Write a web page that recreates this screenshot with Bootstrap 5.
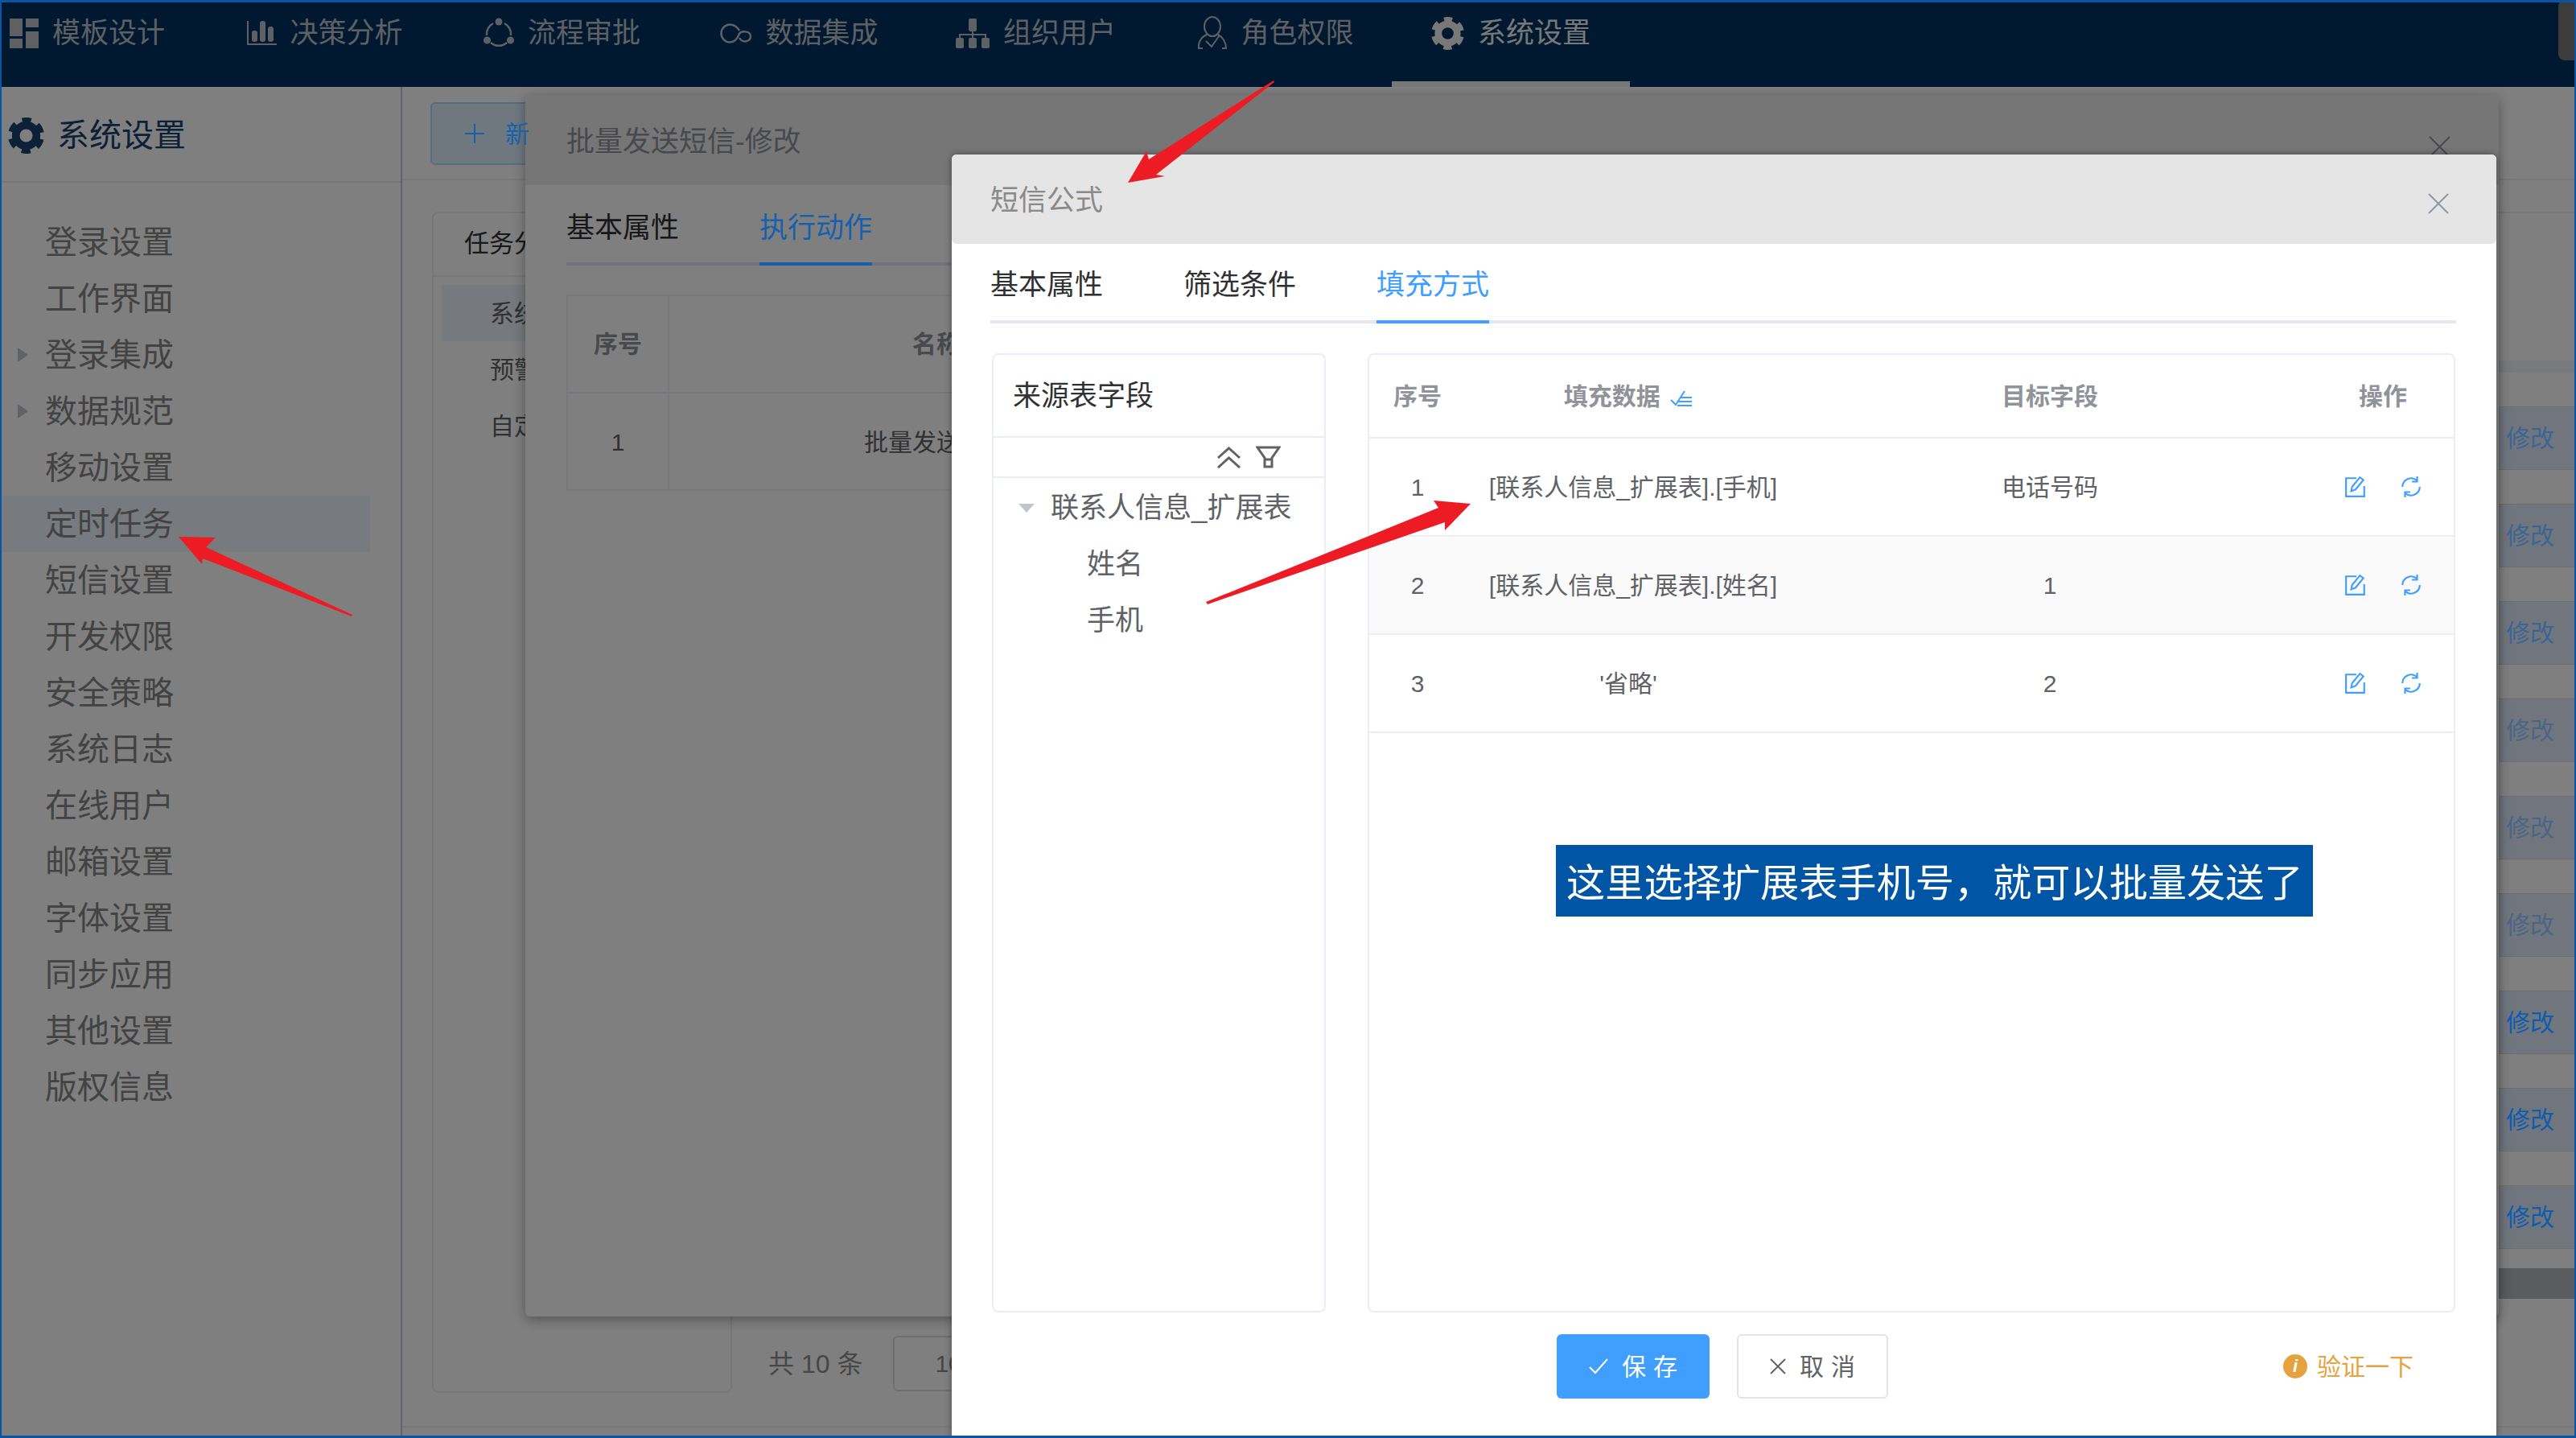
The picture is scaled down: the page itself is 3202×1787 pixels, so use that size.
<!DOCTYPE html>
<html lang="zh-CN">
  <head>
    <meta charset="UTF-8" />
    <title>短信公式</title>
    <link
      href="https://cdn.jsdelivr.net/npm/bootstrap@5.3.0/dist/css/bootstrap.min.css"
      rel="stylesheet"
    />
    <style>
      html,
      body {
        height: 100%;
      }
      body {
        position: relative;
        overflow: hidden;
        background: #fff;
        color: #606266;
        font-family: "Liberation Sans", "Noto Sans CJK SC", sans-serif;
        font-size: 30px;
      }
      .app-shell {
        height: 1787px;
      }
      /* saturated blues stay bright above the dim layer */
      .over-dim {
        position: relative;
        z-index: 1;
      }

      /* top bar */
      .top-bar {
        height: 108px;
        flex: none;
        background: #003060;
        padding-left: 0;
        color: #bcc0c8;
        font-size: 35px;
      }
      .top-item {
        width: 295.5px;
        height: 108px;
        flex: none;
        line-height: 82px;
        padding-left: 50px;
        border-bottom: 7px solid transparent;
      }
      .top-item:first-child {
        margin-left: -46px;
      }
      .top-item.is-on {
        width: 296px;
        margin-left: 3px;
        padding-left: 46px;
        color: #f0f0f0;
        border-bottom-color: #f0f0f0;
      }
      .top-icon {
        width: 61px;
        height: 82px;
        padding-right: 17px;
      }
      .top-blob {
        position: absolute;
        top: 0;
        right: 0;
        width: 22px;
        height: 75px;
        background: #787878;
        border-radius: 8px 0 0 8px;
      }

      /* left menu */
      .side-menu {
        width: 500px;
        flex: none;
        border-right: 2px solid #c6c6d6;
      }
      .side-title {
        height: 119px;
        padding: 3px 0 0 10px;
        gap: 16px;
        border-bottom: 2px solid #eaeaf4;
        font-size: 40px;
        color: #184070;
      }
      .side-list {
        padding-top: 39px;
        width: 460px;
      }
      .side-item {
        height: 70px;
        padding-left: 22px;
        font-size: 40px;
        color: #868686;
      }
      .side-item.is-on {
        background: #eef4ff;
      }
      .side-caret {
        width: 34px;
      }
      .caret-right {
        display: block;
        width: 0;
        height: 0;
        border-style: solid;
        border-width: 9px 0 9px 13px;
        border-color: transparent transparent transparent #c0c4cc;
      }

      /* page behind the dialogs */
      .page-main {
        padding-bottom: 13px;
      }
      .page-inner {
        border-bottom: 2px solid #ebeef5;
        height: 100%;
      }
      .tool-row {
        height: 116px;
        padding: 19px 0 0 35px;
        border-bottom: 2px solid #ebeef5;
      }
      .add-btn {
        width: 200px;
        height: 78px;
        padding-left: 40px;
        gap: 25px;
        background: #dff0ff;
        border: 2px solid #b3d8ff;
        border-radius: 6px;
        color: #1660ad;
      }
      .page-body {
        padding: 39px 0 0 37px;
        gap: 15px;
      }
      .class-box {
        width: 373px;
        height: 1468px;
        flex: none;
        border: 2px solid #ebeef5;
        border-radius: 8px;
      }
      .class-head {
        height: 79px;
        padding-left: 38px;
        border-bottom: 2px solid #ebeef5;
        font-size: 31px;
        color: #303133;
      }
      .class-list {
        padding: 10px 10px 0;
      }
      .class-row {
        height: 70px;
        padding-left: 60px;
      }
      .class-row.is-on {
        background: #ecf2fb;
      }
      .task-head {
        height: 185px;
        border-top: 2px solid #ebeef5;
      }
      .task-band {
        height: 15px;
        background: #f0f4fa;
        margin-bottom: 42px;
      }
      .task-row {
        height: 79px;
        margin-bottom: 42px;
        padding-right: 27px;
        background: #e2ecfc;
        border-top: 1px solid #ddd;
        border-bottom: 1px solid #ddd;
      }
      .link-dim {
        color: #3a6594;
      }
      .link-mid {
        color: #4a6585;
      }
      .link-on {
        color: #0d5cb0;
      }
      .task-bar {
        height: 38px;
        margin-top: -18px;
        background: #b4b8c0;
      }
      .pager-row {
        margin-top: 46px;
        padding-left: 30px;
        gap: 38px;
        color: #8e8e8e;
      }
      .pager-total {
        font-size: 32px;
      }
      .pager-box {
        width: 200px;
        height: 69px;
        padding-left: 50px;
        border: 2px solid #dcdfe6;
        border-radius: 6px;
      }

      /* first dialog, dimmed */
      .dialog-back {
        position: absolute;
        left: 653px;
        top: 118px;
        width: 2453px;
        height: 1518px;
        background: #fff;
        border-radius: 6px;
        box-shadow: 0 4px 16px rgba(0, 0, 0, 0.35);
      }
      .dialog-back-head {
        height: 112px;
        padding: 4px 60px 0 51px;
        background: #ececec;
        border-radius: 6px 6px 0 0;
        font-size: 35px;
        color: #909399;
      }
      .back-close {
        margin-top: 12px;
      }
      .back-tabs {
        height: 100px;
        margin: 0 51px;
        gap: 100px;
        border-bottom: 4px solid #e4e7ed;
        font-size: 35px;
        color: #303133;
      }
      .back-tab {
        height: 100px;
        line-height: 105px;
      }
      .back-tab.is-on {
        color: #1660ad;
        border-bottom: 4px solid #1660ad;
      }
      .back-table {
        margin: 36px 0 0 51px;
        width: 2351px;
        height: 244px;
        border: 2px solid #ebeef5;
      }
      .back-cell-a {
        width: 126px;
        border-right: 2px solid #ebeef5;
      }
      .back-line {
        height: 121px;
        border-bottom: 2px solid #ebeef5;
      }
      .back-bold {
        font-weight: 700;
        color: #909399;
      }
      .back-name {
        width: 664px;
      }

      .dim-layer {
        position: absolute;
        inset: 0;
        background: rgba(0, 0, 0, 0.5);
      }

      /* formula dialog */
      .dialog-front {
        position: absolute;
        left: 1183px;
        top: 192px;
        width: 1920px;
        height: 1595px;
        background: #fff;
        border-radius: 6px 6px 0 0;
        box-shadow: 0 0 8px rgba(0, 0, 0, 0.4);
      }
      .front-head {
        height: 111px;
        padding: 4px 59px 0 48px;
        background: #e5e5e5;
        border-radius: 6px;
        font-size: 35px;
        color: #8a8a8a;
      }
      .front-close {
        margin-top: 6px;
      }
      .front-tabs {
        height: 99px;
        margin: 0 50px 0 48px;
        gap: 100px;
        border-bottom: 4px solid #e4e7ed;
        font-size: 35px;
        color: #303133;
      }
      .front-tab {
        height: 99px;
        line-height: 102px;
      }
      .front-tab.is-on {
        color: #409eff;
        border-bottom: 4px solid #409eff;
      }
      .front-body {
        height: 1192px;
        margin: 37px 51px 0 50px;
        gap: 52px;
      }
      .field-box {
        width: 415px;
        flex: none;
        border: 2px solid #ebeef5;
        border-radius: 8px;
      }
      .field-head {
        height: 103px;
        padding: 2px 0 0 24px;
        border-bottom: 2px solid #ebeef5;
        font-size: 35px;
        color: #303133;
      }
      .field-tools {
        height: 50px;
        padding-right: 54px;
        gap: 18px;
        border-bottom: 2px solid #ebeef5;
      }
      .field-tree {
        font-size: 35px;
        padding-top: 2px;
      }
      .tree-row {
        height: 70px;
        padding-left: 31px;
        gap: 20px;
      }
      .tree-leaf {
        height: 70px;
        padding-left: 116px;
      }
      .caret-down {
        width: 0;
        height: 0;
        border-style: solid;
        border-width: 11px 10px 0;
        border-color: #c0c4cc transparent transparent;
      }
      .map-box {
        flex: 1 1 auto;
        border: 2px solid #ebeef5;
        border-radius: 8px;
        overflow: hidden;
      }
      .map-table {
        width: 100%;
        table-layout: fixed;
        margin: 0;
        --bs-table-bg: transparent;
      }
      .map-table th,
      .map-table td {
        text-align: center;
        vertical-align: middle;
        padding: 0;
        border-bottom: 2px solid #ebeef5;
        font-size: 30px;
        color: #606266;
      }
      .map-table th {
        height: 103px;
        color: #909399;
        font-weight: 700;
      }
      .map-table th.th-data {
        padding-right: 12px;
      }
      .map-table th.th-op {
        padding-left: 16px;
      }
      .map-table td {
        height: 122px;
      }
      .map-table td.td-quote {
        padding-right: 12px;
      }
      .map-table tr.row-alt td {
        background: #fafafa;
      }
      .col-no {
        width: 120px;
      }
      .col-data {
        width: 416px;
      }
      .col-target {
        width: 620px;
      }
      .op-cell {
        gap: 41px;
        padding-left: 16px;
      }
      .note-box {
        position: absolute;
        left: 751px;
        top: 858px;
        width: 941px;
        height: 89px;
        padding: 6px 0 0 13px;
        background: #0055a5;
        color: #fff;
        font-size: 48.2px;
        white-space: nowrap;
      }
      .front-foot {
        margin-top: 27px;
        padding: 0 103px 0 752px;
      }
      .save-btn,
      .cancel-btn {
        height: 80px;
        padding: 0 0 0 9px;
        gap: 17px;
        font-size: 30px;
        letter-spacing: 9px;
        border-radius: 6px;
      }
      .save-btn {
        width: 190px;
        background: #409eff;
        border: 0;
        color: #fff;
      }
      .cancel-btn {
        width: 188px;
        margin-left: 34px;
        background: #fff;
        border: 2px solid #e4e4e4;
        color: #606266;
      }
      .check-link {
        margin-left: auto;
        gap: 12px;
        color: #e6a23c;
      }
      .info-dot {
        width: 30px;
        height: 30px;
        border-radius: 50%;
        background: #e6a23c;
        color: #fff;
        font-size: 22px;
        font-style: italic;
        font-weight: 700;
        line-height: 30px;
        text-align: center;
      }

      .arrow-layer {
        position: absolute;
        left: 0;
        top: 0;
        z-index: 2;
        pointer-events: none;
      }
      .shot-frame {
        position: absolute;
        inset: 0;
        z-index: 2;
        border-style: solid;
        border-color: #0a55a3;
        border-width: 3px 2px 3px 2px;
        pointer-events: none;
      }
    </style>
  </head>

  <body>
    <svg width="0" height="0" class="position-absolute">
      <symbol id="gear" viewBox="0 0 28 28">
        <circle cx="14" cy="14" r="8" fill="none" stroke="currentColor" stroke-width="6" />
        <circle
          cx="14"
          cy="14"
          r="11.5"
          fill="none"
          stroke="currentColor"
          stroke-width="5"
          stroke-dasharray="6.6 5.44"
          stroke-dashoffset="-2.72"
        />
      </symbol>
      <symbol id="edit" viewBox="0 0 26 26">
        <path d="M14 3H2v21h21V12" fill="none" stroke="#409eff" stroke-width="2" />
        <path d="M9 13 18 2l4 3-9 11-5 2z" fill="none" stroke="#409eff" stroke-width="2" />
      </symbol>
      <symbol id="swap" viewBox="0 0 26 26">
        <path d="M3 13a10 10 0 0 1 17-7" fill="none" stroke="#409eff" stroke-width="2" />
        <path d="M23 13a10 10 0 0 1-17 7" fill="none" stroke="#409eff" stroke-width="2" />
        <path d="M20 1v6h-6M6 25v-6h6" fill="none" stroke="#409eff" stroke-width="2" />
      </symbol>
    </svg>

    <div class="app-shell d-flex flex-column">
      <header class="top-bar d-flex position-relative">
        <div class="top-item d-flex">
          <div class="top-icon d-flex align-items-center justify-content-end">
            <svg width="36" height="37" viewBox="0 0 36 37" fill="currentColor">
              <rect width="16" height="22" />
              <rect x="20" width="16" height="11" />
              <rect y="25" width="16" height="12" />
              <rect x="20" y="16" width="16" height="21" />
            </svg>
          </div>
          模板设计
        </div>
        <div class="top-item d-flex">
          <div class="top-icon d-flex align-items-center justify-content-end">
            <svg width="37" height="30" viewBox="0 0 37 30" fill="currentColor">
              <path d="M1 0v29h36" fill="none" stroke="currentColor" stroke-width="2" />
              <rect x="6" y="12" width="7" height="14" rx="3" />
              <rect x="16" y="0" width="7" height="26" rx="3" />
              <rect x="26" y="7" width="7" height="19" rx="3" />
            </svg>
          </div>
          决策分析
        </div>
        <div class="top-item d-flex">
          <div class="top-icon d-flex align-items-center justify-content-end">
            <svg width="38" height="38" viewBox="0 0 38 38" fill="none" stroke="currentColor" stroke-width="2.5">
              <path d="M12 7A15 15 0 0 0 4 22M26 7a15 15 0 0 1 8 15M9 31a15 15 0 0 0 20 0" />
              <circle cx="19" cy="5" r="4.5" fill="currentColor" stroke="none" />
              <circle cx="4.5" cy="28" r="4.5" fill="currentColor" stroke="none" />
              <circle cx="33.5" cy="28" r="4.5" fill="currentColor" stroke="none" />
            </svg>
          </div>
          流程审批
        </div>
        <div class="top-item d-flex">
          <div class="top-icon d-flex align-items-center justify-content-end">
            <svg width="40" height="25" viewBox="0 0 40 25" fill="none" stroke="currentColor" stroke-width="2.5">
              <path d="M24 9C21 4 18 1.500 12.500 1.500A11 11 0 0 0 12.500 23.500C19 23.500 22 18 24 13 26 9 38 9 38 16 38 23 28 25 24 18" />
            </svg>
          </div>
          数据集成
        </div>
        <div class="top-item d-flex">
          <div class="top-icon d-flex align-items-center justify-content-end">
            <svg width="42" height="37" viewBox="0 0 42 37" fill="currentColor">
              <rect x="16" width="10" height="16" rx="2" />
              <path d="M21 16v8M5 24v-4h32v4" fill="none" stroke="currentColor" stroke-width="2" />
              <rect y="24" width="10" height="13" rx="2" />
              <rect x="16" y="24" width="10" height="13" rx="2" />
              <rect x="32" y="24" width="10" height="13" rx="2" />
            </svg>
          </div>
          组织用户
        </div>
        <div class="top-item d-flex">
          <div class="top-icon d-flex align-items-center justify-content-end">
            <svg width="38" height="42" viewBox="0 0 38 42" fill="none" stroke="currentColor" stroke-width="2">
              <ellipse cx="19" cy="13" rx="10" ry="12" />
              <path d="M12 23C5 26 1 33 2 40h5M26 23c6 3 10 10 10 17h-5M11 31l7 7 9-13" />
            </svg>
          </div>
          角色权限
        </div>
        <div class="top-item is-on d-flex">
          <div class="top-icon d-flex align-items-center justify-content-end">
            <svg width="41" height="41"><use href="#gear" /></svg>
          </div>
          系统设置
        </div>
        <div class="top-blob"></div>
      </header>

      <div class="d-flex flex-grow-1 overflow-hidden">
        <aside class="side-menu">
          <div class="side-title d-flex align-items-center">
            <svg width="45" height="47"><use href="#gear" /></svg>
            系统设置
          </div>
          <div class="side-list" id="sideList"></div>
        </aside>

        <main class="page-main flex-grow-1 overflow-hidden">
          <div class="page-inner">
            <div class="tool-row">
              <div class="add-btn d-flex align-items-center">
                <svg class="over-dim" width="26" height="26" viewBox="0 0 26 26" stroke="#1660ad" stroke-width="2">
                  <path d="M13 1v24M1 13h24" />
                </svg>
                <span class="over-dim">新</span>
              </div>
            </div>
            <div class="page-body d-flex">
              <div class="class-box">
                <div class="class-head d-flex align-items-center">任务分类</div>
                <div class="class-list">
                  <div class="class-row is-on d-flex align-items-center">系统任务</div>
                  <div class="class-row d-flex align-items-center">预警任务</div>
                  <div class="class-row d-flex align-items-center">自定义任务</div>
                </div>
              </div>
              <div class="flex-grow-1">
                <div class="task-head"></div>
                <div class="task-band"></div>
                <div id="taskRows"></div>
                <div class="task-bar"></div>
                <div class="pager-row d-flex align-items-center">
                  <span class="pager-total">共 10 条</span>
                  <div class="pager-box d-flex align-items-center">10条/页</div>
                </div>
              </div>
            </div>
          </div>
        </main>
      </div>
    </div>

    <section class="dialog-back">
      <div class="dialog-back-head d-flex align-items-center justify-content-between">
        <span>批量发送短信-修改</span>
        <svg class="back-close" width="27" height="27" viewBox="0 0 26 26" stroke="#909399" stroke-width="2">
          <path d="M1 1l24 24M25 1 1 25" />
        </svg>
      </div>
      <div class="back-tabs d-flex">
        <div class="back-tab">基本属性</div>
        <div class="back-tab is-on over-dim">执行动作</div>
      </div>
      <div class="back-table">
        <div class="back-line d-flex">
          <div class="back-cell-a back-bold d-flex align-items-center justify-content-center">序号</div>
          <div class="back-name back-bold d-flex align-items-center justify-content-center">名称</div>
        </div>
        <div class="back-line d-flex border-bottom-0">
          <div class="back-cell-a d-flex align-items-center justify-content-center">1</div>
          <div class="back-name d-flex align-items-center justify-content-center">批量发送短信</div>
        </div>
      </div>
    </section>

    <div class="dim-layer"></div>

    <section class="dialog-front">
      <div class="front-head d-flex align-items-center justify-content-between">
        <span>短信公式</span>
        <svg class="front-close" width="26" height="26" viewBox="0 0 26 26" stroke="#8f99a6" stroke-width="2">
          <path d="M1 1l24 24M25 1 1 25" />
        </svg>
      </div>
      <div class="front-tabs d-flex">
        <div class="front-tab">基本属性</div>
        <div class="front-tab">筛选条件</div>
        <div class="front-tab is-on">填充方式</div>
      </div>

      <div class="front-body d-flex">
        <div class="field-box">
          <div class="field-head d-flex align-items-center">来源表字段</div>
          <div class="field-tools d-flex align-items-center justify-content-end">
            <svg width="31" height="27" viewBox="0 0 31 27" fill="none" stroke="#606266" stroke-width="3">
              <path d="M2 14 15.500 2 29 14M2 26l13.500-12L29 26" />
            </svg>
            <svg width="31" height="28" viewBox="0 0 31 28" fill="none" stroke="#606266" stroke-width="3">
              <path d="M2 2h27L20 15v11h-9V15zM11 17h9" />
            </svg>
          </div>
          <div class="field-tree">
            <div class="tree-row d-flex align-items-center"><span class="caret-down"></span>联系人信息_扩展表</div>
            <div class="tree-leaf d-flex align-items-center">姓名</div>
            <div class="tree-leaf d-flex align-items-center">手机</div>
          </div>
        </div>

        <div class="map-box">
          <table class="table map-table">
            <colgroup>
              <col class="col-no" />
              <col class="col-data" />
              <col class="col-target" />
              <col />
            </colgroup>
            <thead>
              <tr>
                <th>序号</th>
                <th class="th-data">
                  填充数据
                  <svg width="28" height="20" viewBox="0 0 28 20" fill="none" stroke="#409eff" stroke-width="2" class="ms-1">
                    <path d="M1 12l6 6L18 1M13 9h14M10 14h17M9 19h18" />
                  </svg>
                </th>
                <th>目标字段</th>
                <th class="th-op">操作</th>
              </tr>
            </thead>
            <tbody id="mapRows"></tbody>
          </table>
        </div>
      </div>

      <div class="note-box d-flex align-items-center">这里选择扩展表手机号，就可以批量发送了</div>

      <div class="front-foot d-flex align-items-center">
        <button class="save-btn d-flex align-items-center justify-content-center" type="button">
          <svg width="24" height="20" viewBox="0 0 24 20" fill="none" stroke="#fff" stroke-width="2">
            <path d="M1 11l7 7L23 1" />
          </svg>
          保存
        </button>
        <button class="cancel-btn d-flex align-items-center justify-content-center" type="button">
          <svg width="20" height="20" viewBox="0 0 20 20" stroke="#606266" stroke-width="2">
            <path d="M1 1l18 18M19 1 1 19" />
          </svg>
          取消
        </button>
        <div class="check-link d-flex align-items-center">
          <span class="info-dot">i</span>
          验证一下
        </div>
      </div>
    </section>

    <svg class="arrow-layer" width="3202" height="1787" viewBox="0 0 3202 1787" fill="#ed1c24">
      <polygon points="1583,100 1584,102 1437,217 1448,219 1402,227 1425,188 1428,198" />
      <polygon points="438,764 437,766 252,694 251,701 222,667 268,668 256,680" />
      <polygon points="1499,748 1501,751 1796,649 1796,659 1828,626 1782,622 1788,631" />
    </svg>

    <div class="shot-frame"></div>

    <script>
      const sideItems = [
        "登录设置",
        "工作界面",
        "登录集成",
        "数据规范",
        "移动设置",
        "定时任务",
        "短信设置",
        "开发权限",
        "安全策略",
        "系统日志",
        "在线用户",
        "邮箱设置",
        "字体设置",
        "同步应用",
        "其他设置",
        "版权信息",
      ];
      const sideList = document.getElementById("sideList");
      sideItems.forEach((name, i) => {
        const row = document.createElement("div");
        row.className = "side-item d-flex align-items-center" + (i === 5 ? " is-on" : "");
        const caret = i === 2 || i === 3 ? '<span class="caret-right"></span>' : "";
        row.innerHTML = `<span class="side-caret">${caret}</span>${name}`;
        sideList.appendChild(row);
      });

      const taskRows = document.getElementById("taskRows");
      for (let i = 0; i < 9; i++) {
        const tone = i < 3 ? "link-dim" : i < 6 ? "link-mid" : "link-on";
        const row = document.createElement("div");
        row.className = "task-row d-flex align-items-center justify-content-end";
        row.innerHTML = `<span class="over-dim ${tone}">修改</span>`;
        taskRows.appendChild(row);
      }

      const mapData = [
        ["1", "[联系人信息_扩展表].[手机]", "电话号码"],
        ["2", "[联系人信息_扩展表].[姓名]", "1"],
        ["3", "'省略'", "2"],
      ];
      const mapRows = document.getElementById("mapRows");
      mapData.forEach((item, i) => {
        const row = document.createElement("tr");
        if (i === 1) row.className = "row-alt";
        row.innerHTML = `<td>${item[0]}</td>
                         <td class="${i === 2 ? "td-quote" : ""}">${item[1]}</td>
                         <td>${item[2]}</td>
                         <td>
                           <div class="op-cell d-flex justify-content-center">
                             <svg width="28" height="28"><use href="#edit" /></svg>
                             <svg width="28" height="28"><use href="#swap" /></svg>
                           </div>
                         </td>`;
        mapRows.appendChild(row);
      });
    </script>
    <script src="https://cdn.jsdelivr.net/npm/bootstrap@5.3.0/dist/js/bootstrap.bundle.min.js"></script>
  </body>
</html>
